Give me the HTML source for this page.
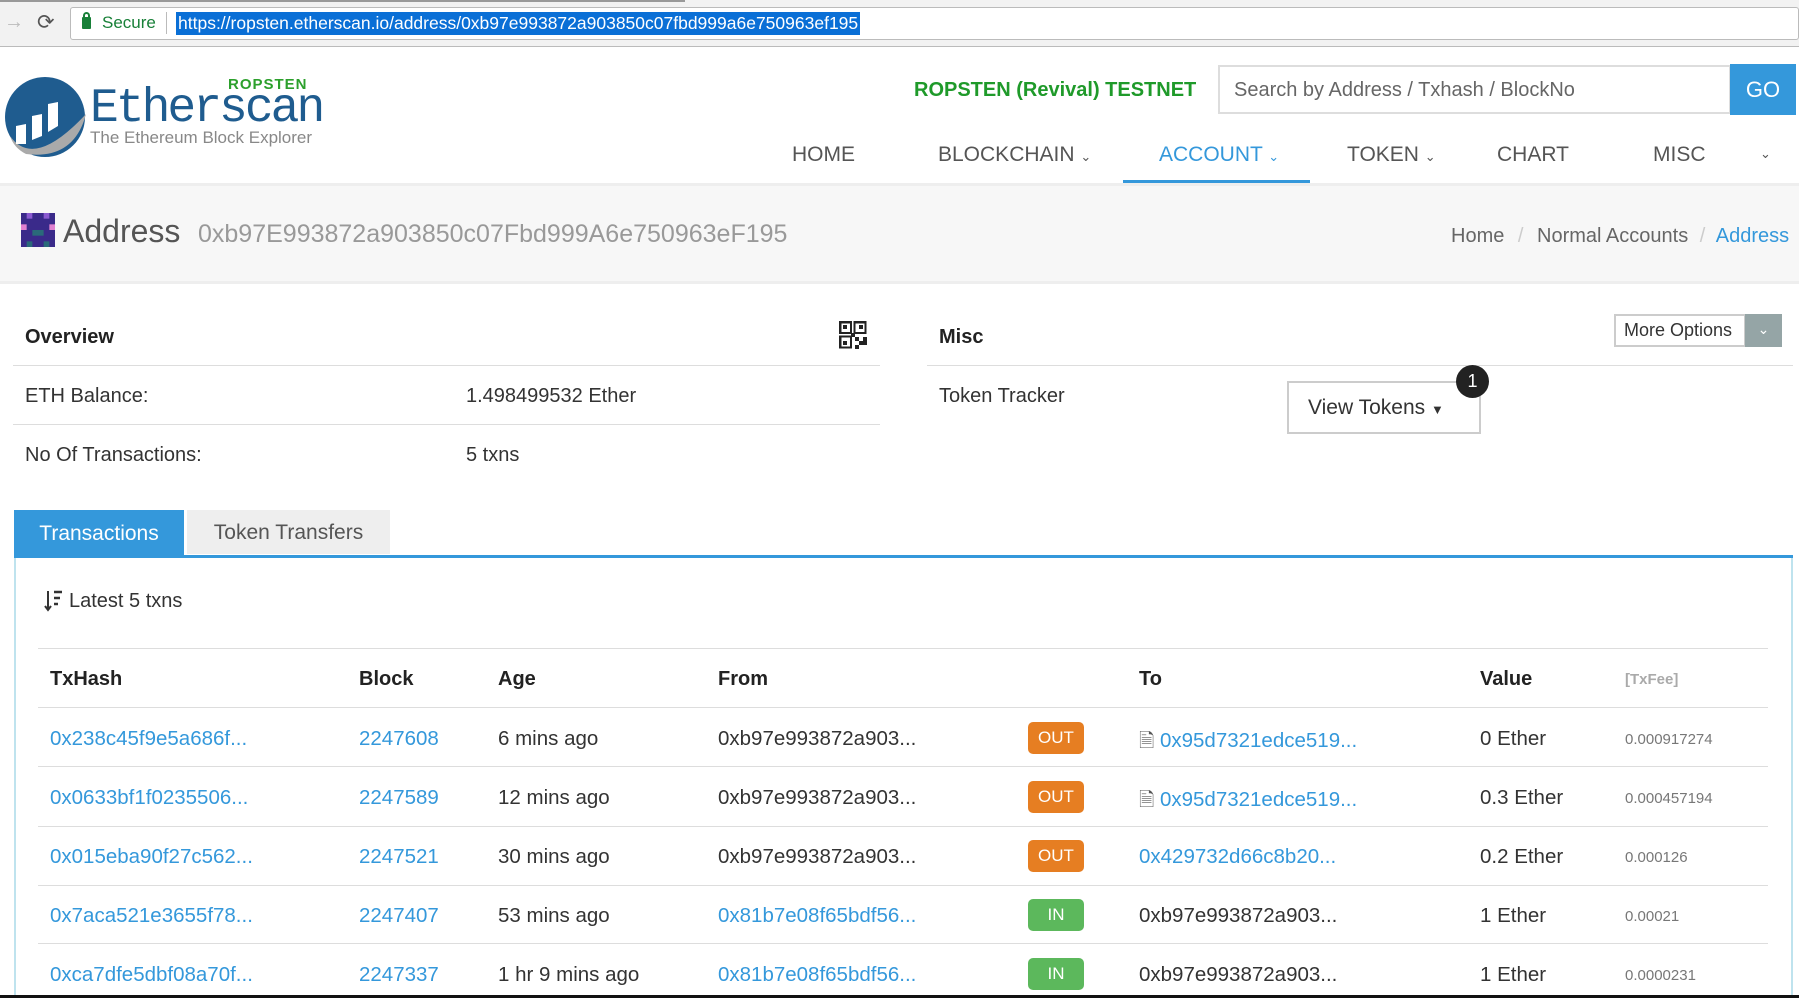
<!DOCTYPE html>
<html><head><meta charset="utf-8"><style>
*{margin:0;padding:0;box-sizing:border-box}
body{width:1799px;height:998px;overflow:hidden;background:#fff;font-family:"Liberation Sans",Arial,sans-serif;color:#333;position:relative}
.a{position:absolute;white-space:nowrap}
.lnk{color:#3498db}
.hl{position:absolute;height:1px;background:#ddd}
.nav{position:absolute;top:143px;font-size:21px;color:#555}
.th{font-weight:bold;font-size:20px;color:#222}
.td{font-size:20.5px}
.badge{position:absolute;width:56px;height:32px;border-radius:5px;color:#fff;font-size:17px;text-align:center;line-height:32px}
.out{background:#e67e22}.in{background:#5cb85c}
.fee{font-size:15px;color:#777}
</style></head><body>
<!-- browser bar -->
<div class="a" style="left:0;top:0;width:1799px;height:47px;background:#f2f2f2;border-bottom:1px solid #bbb"></div>
<div class="a" style="left:0;top:0;width:685px;height:2px;background:#999"></div>
<div class="a" style="left:4px;top:11px;font-size:20px;color:#bbb">→</div>
<div class="a" style="left:37px;top:10px;font-size:21px;color:#555">⟳</div>
<div class="a" style="left:70px;top:7px;width:1729px;height:33px;background:#fff;border:1px solid #bbb;border-radius:3px"></div>
<div class="a" style="left:82px;top:17px;width:9px;height:12px;background:#188038;border-radius:1px"></div>
<div class="a" style="left:83px;top:12px;width:7px;height:8px;border:2px solid #188038;border-bottom:none;border-radius:4px 4px 0 0"></div>
<div class="a" style="left:102px;top:13px;font-size:17px;color:#188038">Secure</div>
<div class="a" style="left:166px;top:12px;width:1px;height:22px;background:#bbb"></div>
<div class="a" style="left:176px;top:12px;height:23px;background:#0a6fd6;color:#fff;font-size:17.5px;line-height:23px;padding:0 2px">https://ropsten.etherscan.io/address/0xb97e993872a903850c07fbd999a6e750963ef195</div>
<!-- logo -->
<svg class="a" style="left:4px;top:74px" width="82" height="86" viewBox="0 0 82 86">
<circle cx="41" cy="43" r="40" fill="#1f5c8f"/>
<path d="M6 62 Q30 96 82 40 Q70 86 22 80 Q10 74 6 62Z" fill="#aaa"/>
<path d="M12 70 L12 52 L22 50 L22 70Z M28 66 L28 42 L38 40 L38 62Z M44 58 L44 30 L54 28 L54 52Z" fill="#fff"/>
</svg>
<div class="a" style="left:228px;top:76px;font-size:15px;font-weight:bold;color:#2ca02c;letter-spacing:1px">ROPSTEN</div>
<div class="a" style="left:90px;top:82px;font-size:48px;color:#1f5c8f;font-family:'Liberation Mono',monospace;letter-spacing:-3px">Etherscan</div>
<div class="a" style="left:90px;top:128px;font-size:17px;color:#888">The Ethereum Block Explorer</div>
<!-- header right -->
<div class="a" style="left:914px;top:79px;font-size:20px;font-weight:bold;color:#1f9a2a">ROPSTEN (Revival) TESTNET</div>
<div class="a" style="left:1218px;top:65px;width:513px;height:49px;border:2px solid #ddd;background:#fff"></div>
<div class="a" style="left:1234px;top:79px;font-size:20px;color:#666">Search by Address / Txhash / BlockNo</div>
<div class="a" style="left:1730px;top:64px;width:66px;height:51px;background:#3498db;color:#fff;font-size:22px;text-align:center;line-height:51px">GO</div>
<div class="nav" style="left:792px">HOME</div>
<div class="nav" style="left:938px">BLOCKCHAIN <span style="font-size:13px">⌄</span></div>
<div class="nav" style="left:1159px;color:#3498db">ACCOUNT <span style="font-size:13px">⌄</span></div>
<div class="nav" style="left:1347px">TOKEN <span style="font-size:13px">⌄</span></div>
<div class="nav" style="left:1497px">CHART</div>
<div class="nav" style="left:1653px">MISC</div>
<div class="nav" style="left:1760px;font-size:13px;top:146px">⌄</div>
<div class="a" style="left:1123px;top:180px;width:187px;height:4px;background:#3498db"></div>
<!-- address band -->
<div class="a" style="left:0;top:183px;width:1799px;height:101px;background:#f7f7f7;border-top:3px solid #eee;border-bottom:3px solid #eee"></div>
<svg class="a" style="left:21px;top:213px" width="34" height="34" viewBox="0 0 6 6">
<rect width="6" height="6" fill="#3a2a8a"/><rect x="1" y="0" width="1" height="1" fill="#8a5ad0"/><rect x="4" y="0" width="1" height="1" fill="#8a5ad0"/><rect x="0" y="2" width="1" height="1" fill="#e080d0"/><rect x="5" y="2" width="1" height="1" fill="#e080d0"/><rect x="2" y="3" width="2" height="1" fill="#2a6a7a"/><rect x="1" y="5" width="1" height="1" fill="#2a6a7a"/><rect x="4" y="5" width="1" height="1" fill="#2a6a7a"/>
</svg>
<div class="a" style="left:63px;top:213px;font-size:32px;color:#555">Address</div>
<div class="a" style="left:198px;top:220px;font-size:25px;color:#999">0xb97E993872a903850c07Fbd999A6e750963eF195</div>
<div class="a" style="left:1451px;top:225px;font-size:20px;color:#666">Home <span style="color:#ccc;margin:0 8px">/</span> Normal Accounts <span style="color:#ccc;margin:0 6px">/</span> <span style="color:#3498db">Address</span></div>
<!-- overview -->
<div class="a" style="left:25px;top:326px;font-size:20px;font-weight:bold;color:#222">Overview</div>
<svg class="a" style="left:839px;top:321px" width="28" height="28" viewBox="0 0 7 7" shape-rendering="crispEdges">
<path d="M0 0h3v3h-3zM4 0h3v3h-3zM0 4h3v3h-3z" fill="none" stroke="#222" stroke-width=".6" transform="translate(.3 .3) scale(.9)"/>
<rect x="1" y="1" width="1" height="1" fill="#222"/><rect x="5" y="1" width="1" height="1" fill="#222"/><rect x="1" y="5" width="1" height="1" fill="#222"/>
<rect x="4" y="4" width="1" height="1" fill="#222"/><rect x="5" y="5" width="2" height="1" fill="#222"/><rect x="3" y="3" width="1" height="1" fill="#222"/><rect x="6" y="4" width="1" height="1" fill="#222"/><rect x="4" y="6" width="1" height="1" fill="#222"/>
</svg>
<div class="hl" style="left:13px;top:365px;width:867px"></div>
<div class="a td" style="left:25px;top:385px;font-size:20px">ETH Balance:</div>
<div class="a td" style="left:466px;top:385px;font-size:20px">1.498499532 Ether</div>
<div class="hl" style="left:13px;top:424px;width:867px"></div>
<div class="a td" style="left:25px;top:444px;font-size:20px">No Of Transactions:</div>
<div class="a td" style="left:466px;top:444px;font-size:20px">5 txns</div>
<!-- misc -->
<div class="a" style="left:939px;top:326px;font-size:20px;font-weight:bold;color:#222">Misc</div>
<div class="a" style="left:1614px;top:314px;width:132px;height:33px;border:2px solid #ccc;background:#fff;font-size:18px;line-height:29px;padding-left:8px">More Options</div>
<div class="a" style="left:1745px;top:314px;width:37px;height:33px;background:#95a5a6;color:#fff;text-align:center;line-height:31px;font-size:14px">⌄</div>
<div class="hl" style="left:927px;top:365px;width:866px"></div>
<div class="a" style="left:939px;top:385px;font-size:20px">Token Tracker</div>
<div class="a" style="left:1287px;top:381px;width:194px;height:53px;border:2px solid #ccc;background:#fff;font-size:21px;line-height:49px;padding-left:19px;color:#333">View Tokens <span style="font-size:13px">▼</span></div>
<div class="a" style="left:1456px;top:365px;width:33px;height:33px;border-radius:50%;background:#222;color:#fff;font-size:18px;text-align:center;line-height:33px">1</div>
<!-- tabs -->
<div class="a" style="left:14px;top:510px;width:170px;height:46px;background:#3498db;color:#fff;font-size:21px;line-height:47px;text-align:center">Transactions</div>
<div class="a" style="left:187px;top:510px;width:203px;height:44px;background:#eee;color:#555;font-size:21px;line-height:46px;text-align:center">Token Transfers</div>
<div class="a" style="left:14px;top:555px;width:1779px;height:3px;background:#3498db"></div>
<div class="a" style="left:14px;top:558px;width:1779px;height:440px;border:2px solid #bfe3ee;border-top:none;border-bottom:none"></div>
<div class="a" style="left:0;top:995px;width:1799px;height:3px;background:#111"></div>
<!-- table -->
<svg class="a" style="left:44px;top:590px" width="20" height="22" viewBox="0 0 20 22">
<path d="M4 1V19M1 16L4 20L7 16" fill="none" stroke="#333" stroke-width="2"/>
<path d="M10 2h8M10 8h6M10 14h4" stroke="#333" stroke-width="2.5"/>
</svg>
<div class="a" style="left:69px;top:590px;font-size:20px">Latest 5 txns</div>
<div class="hl" style="left:38px;top:648px;width:1730px"></div>
<div class="a th" style="left:50px;top:668px">TxHash</div>
<div class="a th" style="left:359px;top:668px">Block</div>
<div class="a th" style="left:498px;top:668px">Age</div>
<div class="a th" style="left:718px;top:668px">From</div>
<div class="a th" style="left:1139px;top:668px">To</div>
<div class="a th" style="left:1480px;top:668px">Value</div>
<div class="a" style="left:1625px;top:671px;font-size:15px;color:#aaa;font-weight:bold">[TxFee]</div>
<div class="hl" style="left:38px;top:707px;width:1730px"></div>
<div class="hl" style="left:38px;top:766px;width:1730px"></div>
<div class="hl" style="left:38px;top:826px;width:1730px"></div>
<div class="hl" style="left:38px;top:885px;width:1730px"></div>
<div class="hl" style="left:38px;top:943px;width:1730px"></div>

<div class="a td lnk" style="left:50px;top:727px">0x238c45f9e5a686f...</div>
<div class="a td lnk" style="left:359px;top:727px">2247608</div>
<div class="a td" style="left:498px;top:727px">6 mins ago</div>
<div class="a td" style="left:718px;top:727px">0xb97e993872a903...</div>
<div class="badge out" style="left:1028px;top:722px">OUT</div>
<div class="a td" style="left:1139px;top:727px"><span style="color:#555;font-size:19px">🗎</span><span class="lnk"> 0x95d7321edce519...</span></div>
<div class="a td" style="left:1480px;top:727px">0 Ether</div>
<div class="a fee" style="left:1625px;top:731px">0.000917274</div>

<div class="a td lnk" style="left:50px;top:786px">0x0633bf1f0235506...</div>
<div class="a td lnk" style="left:359px;top:786px">2247589</div>
<div class="a td" style="left:498px;top:786px">12 mins ago</div>
<div class="a td" style="left:718px;top:786px">0xb97e993872a903...</div>
<div class="badge out" style="left:1028px;top:781px">OUT</div>
<div class="a td" style="left:1139px;top:786px"><span style="color:#555;font-size:19px">🗎</span><span class="lnk"> 0x95d7321edce519...</span></div>
<div class="a td" style="left:1480px;top:786px">0.3 Ether</div>
<div class="a fee" style="left:1625px;top:790px">0.000457194</div>

<div class="a td lnk" style="left:50px;top:845px">0x015eba90f27c562...</div>
<div class="a td lnk" style="left:359px;top:845px">2247521</div>
<div class="a td" style="left:498px;top:845px">30 mins ago</div>
<div class="a td" style="left:718px;top:845px">0xb97e993872a903...</div>
<div class="badge out" style="left:1028px;top:840px">OUT</div>
<div class="a td lnk" style="left:1139px;top:845px">0x429732d66c8b20...</div>
<div class="a td" style="left:1480px;top:845px">0.2 Ether</div>
<div class="a fee" style="left:1625px;top:849px">0.000126</div>

<div class="a td lnk" style="left:50px;top:904px">0x7aca521e3655f78...</div>
<div class="a td lnk" style="left:359px;top:904px">2247407</div>
<div class="a td" style="left:498px;top:904px">53 mins ago</div>
<div class="a td lnk" style="left:718px;top:904px">0x81b7e08f65bdf56...</div>
<div class="badge in" style="left:1028px;top:899px">IN</div>
<div class="a td" style="left:1139px;top:904px">0xb97e993872a903...</div>
<div class="a td" style="left:1480px;top:904px">1 Ether</div>
<div class="a fee" style="left:1625px;top:908px">0.00021</div>

<div class="a td lnk" style="left:50px;top:963px">0xca7dfe5dbf08a70f...</div>
<div class="a td lnk" style="left:359px;top:963px">2247337</div>
<div class="a td" style="left:498px;top:963px">1 hr 9 mins ago</div>
<div class="a td lnk" style="left:718px;top:963px">0x81b7e08f65bdf56...</div>
<div class="badge in" style="left:1028px;top:958px">IN</div>
<div class="a td" style="left:1139px;top:963px">0xb97e993872a903...</div>
<div class="a td" style="left:1480px;top:963px">1 Ether</div>
<div class="a fee" style="left:1625px;top:967px">0.0000231</div>
</body></html>
